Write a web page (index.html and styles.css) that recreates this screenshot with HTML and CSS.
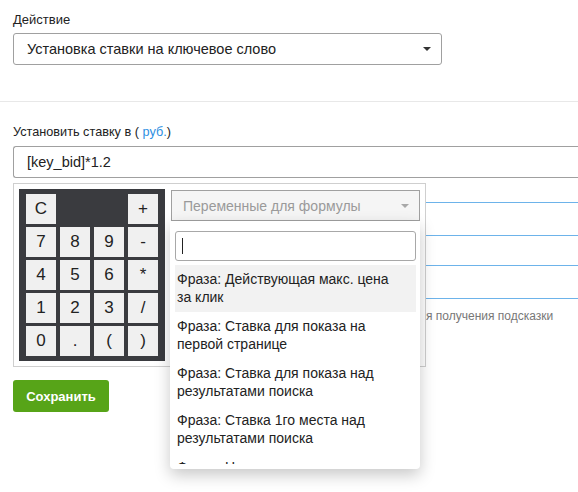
FILE: index.html
```html
<!DOCTYPE html>
<html lang="ru">
<head>
<meta charset="utf-8">
<link rel="stylesheet" href="styles.css">
</head>
<body>
<div class="page">
  <div class="top">
    <div class="lbl">Действие</div>
    <div class="select">
      <span class="select-text">Установка ставки на ключевое слово</span>
      <span class="caret dark"></span>
    </div>
  </div>
  <div class="sep"></div>
  <div class="bid">
    <div class="lbl lbl2">Установить ставку в ( <span class="link">руб.</span>)</div>
    <div class="formula">
      <div class="input">[key_bid]*1.2</div>
      <div class="behind">
        <div class="field"></div>
        <div class="field field2"></div>
        <div class="hint">для получения подсказки</div>
      </div>
      <div class="panel">
        <div class="calc">
          <div class="key">C</div>
          <div class="blank"></div>
          <div class="key">+</div>
          <div class="key">7</div>
          <div class="key">8</div>
          <div class="key">9</div>
          <div class="key">-</div>
          <div class="key">4</div>
          <div class="key">5</div>
          <div class="key">6</div>
          <div class="key">*</div>
          <div class="key">1</div>
          <div class="key">2</div>
          <div class="key">3</div>
          <div class="key">/</div>
          <div class="key">0</div>
          <div class="key">.</div>
          <div class="key">(</div>
          <div class="key">)</div>
        </div>
        <div class="vars">
          <div class="var-select">
            <span>Переменные для формулы</span>
            <span class="caret light"></span>
          </div>
          <div class="popup">
            <div class="search"><span class="cursor"></span></div>
            <div class="list">
              <div class="item active">Фраза: Действующая макс. цена <br>за клик</div>
              <div class="item">Фраза: Ставка для показа на первой странице</div>
              <div class="item">Фраза: Ставка для показа над результатами поиска</div>
              <div class="item">Фраза: Ставка 1го места над результатами поиска</div>
              <div class="item last">Фраза: Новая макс. цена за клик</div>
            </div>
          </div>
        </div>
      </div>
    </div>
    <button class="save">Сохранить</button>
  </div>
</div>
</body>
</html>
```

FILE: styles.css
```css
* { box-sizing: border-box; }
html, body { margin: 0; padding: 0; background: #fff; }
body {
  font-family: "Liberation Sans", Arial, Helvetica, sans-serif;
  color: #222;
  width: 578px;
  height: 492px;
  overflow: hidden;
}
.page { width: 578px; }
.top { padding: 12px 0 36px 13px; }
.lbl { font-size: 13px; line-height: 16px; color: #222; margin-bottom: 5px; }
.select {
  width: 429px;
  height: 32px;
  border: 1px solid #a0a0a0;
  border-radius: 3px;
  display: flex;
  align-items: center;
  justify-content: space-between;
  padding: 0 10px 0 13px;
  font-size: 14.5px;
  color: #222;
}
.caret {
  width: 0; height: 0;
  border-left: 4px solid transparent;
  border-right: 4px solid transparent;
  border-top: 4px solid #333;
}
.caret.dark { border-top-color: #333; }
.caret.light { border-top-color: #a8a8a8; }
.sep { height: 1px; background: #e8e8e8; }
.bid { padding: 22px 0 0 13px; }
.lbl2 { margin-bottom: 6px; font-size: 12.7px; }
.link { color: #2d8fe2; }
.formula { position: relative; }
.input {
  width: 580px;
  height: 32px;
  border: 1px solid #a0a0a0;
  border-right: none;
  border-radius: 3px 0 0 3px;
  padding: 0 13px;
  font-size: 14.5px;
  line-height: 30px;
  color: #222;
}
.behind { padding-top: 24px; }
.field {
  width: 580px;
  height: 34px;
  border-top: 1px solid #6db3ea;
  border-bottom: 1px solid #6db3ea;
}
.field2 { margin-top: 29px; }
.hint {
  margin-top: 9px;
  font-size: 12px;
  line-height: 16px;
  color: #777;
  padding-left: 399px;
  white-space: nowrap;
}
.panel {
  position: absolute;
  left: 0;
  top: 37px;
  width: 413px;
  height: 184px;
  border: 1px solid #cfcfcf;
  background: #fff;
  padding: 5px;
  display: flex;
  align-items: flex-start;
  gap: 6px;
}
.calc {
  width: 146px;
  height: 172px;
  background: #3a3b3f;
  padding: 5px 7px;
  display: grid;
  grid-template-columns: repeat(4, 30px);
  grid-auto-rows: 30px;
  column-gap: 4px;
  row-gap: 3px;
}
.blank { grid-column: span 2; }
.key {
  background: #f0f0f0;
  color: #222;
  font-size: 17px;
  display: flex;
  align-items: center;
  justify-content: center;
}
.vars { position: relative; margin-top: 1px; }
.var-select {
  width: 249px;
  height: 31px;
  background: #f5f5f5;
  border: 1px solid #a0a0a0;
  display: flex;
  align-items: center;
  justify-content: space-between;
  padding: 0 10px 0 11px;
  font-size: 14px;
  color: #9a9a9a;
}
.popup {
  position: absolute;
  left: -1px;
  top: 31px;
  width: 250px;
  height: 248px;
  background: #fff;
  border-radius: 0 0 4px 4px;
  box-shadow: 0 6px 16px rgba(0, 0, 0, 0.22);
  padding: 10px 4px 5px 5px;
  z-index: 2;
}
.search {
  width: 241px;
  height: 30px;
  border: 1px solid #a8a8a8;
  border-radius: 3px;
  display: flex;
  align-items: center;
  padding-left: 6px;
}
.cursor { width: 1px; height: 16px; background: #222; }
.list {
  margin-top: 4px;
  height: 199px;
  overflow: hidden;
  width: 241px;
}
.item {
  font-size: 14px;
  line-height: 18px;
  padding: 5px 8px 6px 2px;
  color: #222;
}
.item.last { white-space: nowrap; }
.item.active { background: #f2f2f2; }
.save {
  margin-top: 56px;
  width: 96px;
  height: 32px;
  border: none;
  border-radius: 3px;
  background: #57a418;
  color: #fff;
  font-family: "Liberation Sans", Arial, sans-serif;
  font-weight: bold;
  font-size: 13px;
  padding: 0;
}
```
